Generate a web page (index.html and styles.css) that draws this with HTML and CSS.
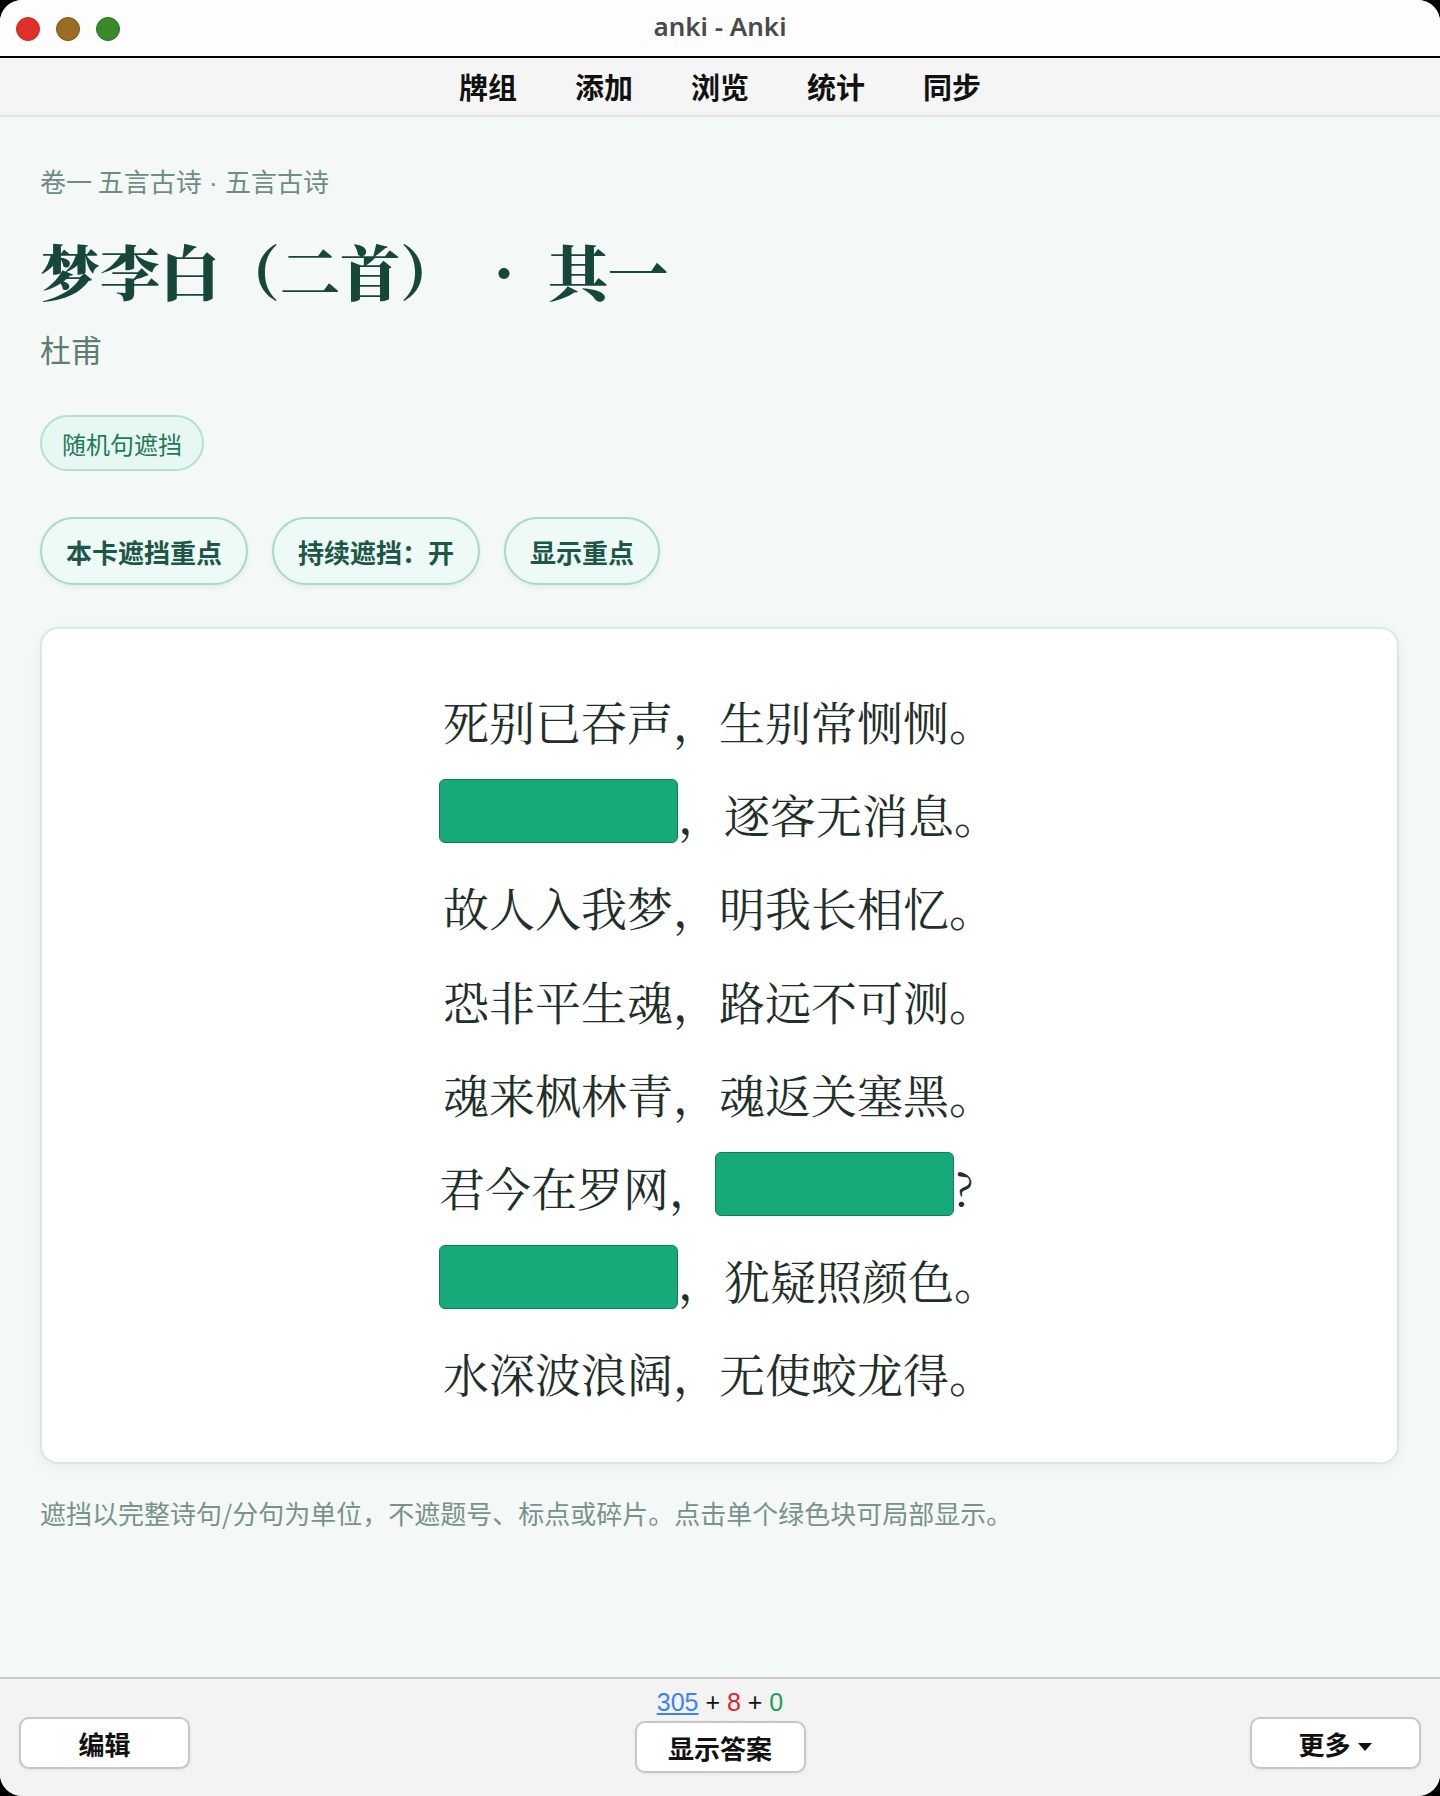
FILE: index.html
```html
<!DOCTYPE html>
<html lang="zh-CN">
<head>
  <meta charset="UTF-8" />
  <title>anki - Anki</title>
  <link rel="stylesheet" href="styles.css">
</head>
<body>
  <div class="window">
    <div class="titlebar">
      <div class="lights">
        <span class="light red"></span>
        <span class="light yellow"></span>
        <span class="light green"></span>
      </div>
      <div class="win-title">anki - Anki</div>
    </div>

    <div class="topnav">
      <span>牌组</span>
      <span>添加</span>
      <span>浏览</span>
      <span>统计</span>
      <span>同步</span>
    </div>

    <div class="main">
      <div class="crumb">卷一 五言古诗<span class="dot"> · </span>五言古诗</div>
      <h1 class="poem-title">梦李白（二首）<span class="sep">·</span>其一</h1>
      <div class="author">杜甫</div>

      <div class="tag-row">
        <button class="pill">随机句遮挡</button>
      </div>

      <div class="action-row">
        <button class="pill strong">本卡遮挡重点</button>
        <button class="pill strong">持续遮挡：开</button>
        <button class="pill strong">显示重点</button>
      </div>

      <div class="card">
        <div class="poem">
          <div class="line">死别已吞声，生别常恻恻。</div>
          <div class="line"><span class="mask"></span>，逐客无消息。</div>
          <div class="line">故人入我梦，明我长相忆。</div>
          <div class="line">恐非平生魂，路远不可测。</div>
          <div class="line">魂来枫林青，魂返关塞黑。</div>
          <div class="line">君今在罗网，<span class="mask"></span>?</div>
          <div class="line"><span class="mask"></span>，犹疑照颜色。</div>
          <div class="line">水深波浪阔，无使蛟龙得。</div>
        </div>
      </div>

      <p class="note">遮挡以完整诗句/分句为单位，不遮题号、标点或碎片。点击单个绿色块可局部显示。</p>
    </div>

    <div class="bottombar">
      <div class="bb-left">
        <button class="btn">编辑</button>
      </div>
      <div class="bb-center">
        <div class="counts"><a class="c-new">305</a> + <span class="c-learn">8</span> + <span class="c-review">0</span></div>
        <button class="btn">显示答案</button>
      </div>
      <div class="bb-right">
        <button class="btn">更多 <span class="caret"></span></button>
      </div>
    </div>
  </div>
</body>
</html>
```

FILE: styles.css
```css
html, body {
  margin: 0;
  padding: 0;
  background-color: #000;
}
body {
  font-family: "Noto Sans CJK SC", "Noto Sans", sans-serif;
  color: #111;
}
.window {
  width: 1440px;
  height: 1796px;
  background-color: #f4f8f7;
  border-radius: 22px;
  overflow: hidden;
  display: flex;
  flex-direction: column;
}
.titlebar {
  height: 56px;
  background-color: #fdfdfd;
  border-bottom: 2px solid #000;
  display: flex;
  align-items: center;
  position: relative;
}
.lights {
  display: flex;
  gap: 16px;
  padding-left: 16px;
  padding-top: 2px;
}
.light {
  width: 22px;
  height: 22px;
  border-radius: 50%;
  border: 1px solid transparent;
}
.light.red {
  background-color: #e0302a;
  border-color: #c8281f;
}
.light.yellow {
  background-color: #9a6e22;
  border-color: #7b5418;
}
.light.green {
  background-color: #3a8a2a;
  border-color: #2c6d1f;
}
.win-title {
  position: absolute;
  left: 0;
  right: 0;
  top: 0;
  bottom: 4px;
  display: flex;
  align-items: center;
  justify-content: center;
  font-family: "Noto Sans", "Open Sans", sans-serif;
  font-size: 26px;
  font-weight: 600;
  color: #4a4a4a;
  pointer-events: none;
}
.topnav {
  height: 59px;
  padding-bottom: 2px;
  box-sizing: border-box;
  background-color: #f5f5f5;
  border-bottom: 2px solid #e3e3e3;
  display: flex;
  justify-content: center;
  align-items: center;
  gap: 58px;
  font-size: 29px;
  font-weight: 700;
  color: #111;
}
.main {
  flex: 1;
  padding: 44px 41px 0 40px;
}
.crumb {
  font-size: 26px;
  line-height: 40px;
  color: #6e8e84;
}
.crumb .dot {
  font-family: "Liberation Sans", sans-serif;
  white-space: pre;
}
.poem-title {
  margin: 28px 0 0;
  font-family: "Noto Serif CJK SC", "Source Han Serif SC", "Songti SC", "Noto Sans CJK SC", serif;
  font-size: 60px;
  line-height: 78px;
  font-weight: 900;
  color: #17463a;
}
.poem-title .sep {
  display: inline-block;
  width: 88px;
  text-align: center;
}
.author {
  margin-top: 19px;
  font-size: 31px;
  line-height: 42px;
  color: #5d7c72;
}
.tag-row {
  margin-top: 45px;
  display: flex;
}
.pill {
  font-family: inherit;
  border-radius: 999px;
  background-color: #e7f7f1;
  border: 2px solid #b2e2cf;
  color: #1c7a5b;
  font-size: 24px;
  height: 56px;
  padding: 0 20px;
  cursor: pointer;
}
.action-row {
  margin-top: 46px;
  display: flex;
  gap: 24px;
}
.pill.strong {
  height: 68px;
  padding: 0 24px;
  font-size: 26px;
  font-weight: 700;
  color: #1d5747;
  background-color: #eefaf6;
  border-color: #a6dbc6;
  box-shadow: 0 2px 5px rgba(30, 90, 70, 0.08);
}
.card {
  margin-top: 42px;
  background-color: #fff;
  border: 2px solid #dae8e3;
  border-radius: 18px;
  padding: 45px 0 42px;
  text-align: center;
  box-shadow: 0 4px 14px rgba(20, 70, 55, 0.05);
}
.poem {
  display: inline-block;
  text-align: left;
  font-family: "Noto Serif CJK SC", "Source Han Serif SC", "Songti SC", "Noto Sans CJK SC", serif;
  font-size: 46px;
  line-height: 93.2px;
  color: #1f2f2a;
}
.line {
  white-space: nowrap;
}
.line:not(:has(.mask)) {
  padding-left: 4px;
}
.mask {
  display: inline-block;
  vertical-align: middle;
  box-sizing: border-box;
  width: 239px;
  height: 64px;
  margin-top: -21px;
  background-color: #16a97a;
  border: 1px solid #0f7f5a;
  border-radius: 6px;
  cursor: pointer;
}
.note {
  margin: 30px 0 0;
  font-size: 26px;
  line-height: 38px;
  color: #789389;
}
.bottombar {
  height: 117px;
  background-color: #f3f3f3;
  border-top: 2px solid #c9c9c9;
  display: grid;
  grid-template-columns: 1fr auto 1fr;
  padding: 0 19px;
}
.bb-left {
  padding-top: 38px;
}
.bb-right {
  padding-top: 38px;
  display: flex;
  justify-content: flex-end;
  align-items: flex-start;
}
.bb-center {
  display: flex;
  flex-direction: column;
  align-items: center;
  padding-top: 9px;
}
.counts {
  font-family: "Liberation Sans", "Noto Sans", sans-serif;
  font-size: 25px;
  line-height: 28px;
  color: #111;
}
.c-new {
  color: #3b82f6;
  text-decoration: underline;
}
.c-learn {
  color: #dc2626;
}
.c-review {
  color: #16a34a;
}
.btn {
  font-family: inherit;
  width: 171px;
  height: 52px;
  background-color: #fff;
  border: 2px solid #c7c7c7;
  border-radius: 10px;
  font-size: 26px;
  font-weight: 700;
  color: #111;
  box-shadow: 0 1px 3px rgba(0, 0, 0, 0.08);
  cursor: pointer;
}
.bb-center .btn {
  margin-top: 5px;
}
.caret {
  display: inline-block;
  width: 0;
  height: 0;
  border-left: 7px solid transparent;
  border-right: 7px solid transparent;
  border-top: 8px solid #111;
  vertical-align: middle;
  margin-left: 2px;
}
```
